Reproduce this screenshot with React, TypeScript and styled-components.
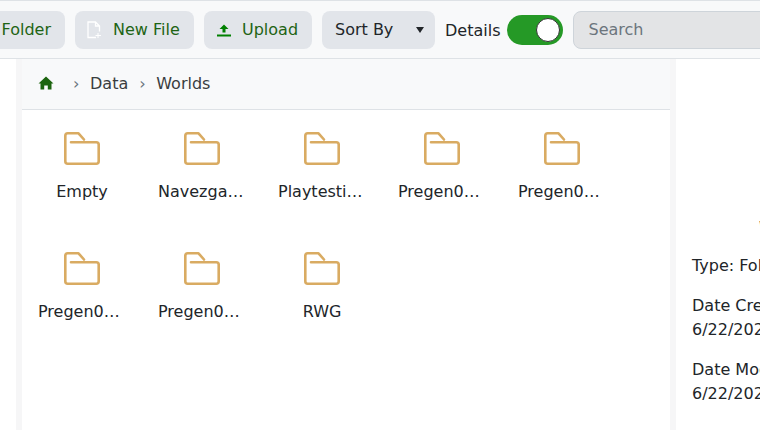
import type { FC } from 'react'
import styled, { createGlobalStyle } from 'styled-components'

const GlobalStyle = createGlobalStyle`
  html, body {
    margin: 0;
    padding: 0;
    background: #fff;
  }

  body {
    width: 760px;
    height: 430px;
    overflow: hidden;
    font-family: "DejaVu Sans", sans-serif;
    font-size: 16px;
    color: #212529;
  }
`

const Page = styled.div`
  display: flex;
  flex-direction: column;
  width: 760px;
  height: 430px;
  overflow: hidden;
`

const Toolbar = styled.div`
  display: flex;
  flex: none;
  align-items: center;
  gap: 10px;
  box-sizing: border-box;
  height: 59px;
  margin-left: -50px;
  padding-top: 1px;
  background: #f8f9fa;
  border-top: 1px solid #dee2e6;
  border-bottom: 1px solid #dee2e6;
`

const ToolButton = styled.button<{ $width: number; $dark?: boolean; $end?: boolean }>`
  display: flex;
  flex: none;
  align-items: center;
  justify-content: ${(p) => (p.$end ? 'flex-end' : 'flex-start')};
  gap: 10px;
  box-sizing: border-box;
  width: ${(p) => p.$width}px;
  height: 38px;
  padding: 0 ${(p) => (p.$end ? 14 : 12)}px 0 ${(p) => (p.$dark ? 13 : 12)}px;
  border: 0;
  border-radius: 8px;
  background: #e2e5ea;
  color: ${(p) => (p.$dark ? '#212529' : '#1e6414')};
  font: inherit;
  white-space: nowrap;
`

const ButtonLabel = styled.span`
  margin-bottom: 2px;
`

const SortCaret = styled.span`
  width: 0;
  height: 0;
  margin-left: auto;
  margin-right: -1px;
  border-top: 6px solid #212529;
  border-left: 4px solid transparent;
  border-right: 4px solid transparent;
`

const Toggle = styled.span`
  display: flex;
  flex: none;
  align-items: center;
  justify-content: flex-end;
  box-sizing: border-box;
  width: 56px;
  height: 30px;
  margin-left: -3px;
  padding: 0 3px;
  border-radius: 15px;
  background: #259926;
`

const ToggleKnob = styled.span`
  box-sizing: border-box;
  width: 24px;
  height: 24px;
  border: 1px solid #333;
  border-radius: 50%;
  background: #fff;
`

const SearchInput = styled.input`
  flex: none;
  box-sizing: border-box;
  width: 300px;
  height: 38px;
  margin-top: -1px;
  padding: 0 14px;
  border: 1px solid #ced4da;
  border-radius: 8px;
  background: #e3e4e6;
  font: inherit;

  &::placeholder {
    color: #6c757d;
    opacity: 1;
  }
`

const Body = styled.div`
  display: flex;
  flex: 1;
  min-height: 0;
`

const Gutter = styled.div`
  flex: none;
  width: 16px;
`

const Browser = styled.main`
  flex: none;
  width: 660px;
  box-sizing: border-box;
  border-left: 6px solid #f6f6f7;
  border-right: 6px solid #f6f6f7;
`

const Breadcrumbs = styled.nav`
  display: flex;
  align-items: center;
  box-sizing: border-box;
  height: 51px;
  padding: 0 0 2px 16px;
  background: #f8f9fa;
  border-bottom: 1px solid #dee2e6;
  color: #3a3d40;
`

const Separator = styled.span`
  width: 6px;
  margin: 0 11px;
  color: #6c757d;
`

const HomeLink = styled.span`
  display: flex;
  width: 16px;
  margin-right: 8px;
`

const FolderGrid = styled.div`
  display: grid;
  grid-template-columns: repeat(5, 120px);
  grid-auto-rows: 120px;
`

const FolderItem = styled.div`
  display: flex;
  flex-direction: column;
  align-items: center;
  box-sizing: border-box;
  padding: 22px 16px 0;
`

const FolderName = styled.span`
  overflow: hidden;
  width: 88px;
  margin-top: 15px;
  line-height: 24px;
  text-align: center;
  text-overflow: ellipsis;
  white-space: nowrap;
`

const Details = styled.aside`
  flex: none;
  box-sizing: border-box;
  width: 220px;
  padding: 157px 16px 0;
  white-space: nowrap;
`

const DetailTitle = styled.h2`
  margin: 0 0 14px;
  font: inherit;
  line-height: 24px;
  text-align: center;
`

const DetailRow = styled.p`
  margin: 0 0 16px;
  line-height: 24px;
`

const FolderIcon: FC = () => (
  <svg width="36" height="33" viewBox="0 0 36 33" fill="none" stroke="#d9ab62" strokeWidth="2.6" strokeLinejoin="round" strokeLinecap="round">
    <path d="M20 7.500L14.500 1.300H3.800C2.200 1.300 1.300 2.200 1.300 3.800V29.200C1.300 30.800 2.200 31.700 3.800 31.700H32.200C33.800 31.700 34.700 30.800 34.700 29.200V12.500C34.700 11 33.800 10.200 32.200 10.200H7" />
  </svg>
)

const NewFileIcon: FC = () => (
  <svg width="16" height="18" viewBox="0 0 16 18" fill="none" stroke="#fff" strokeWidth="1.3">
    <path d="M9 16.500H1V1H8.500L12.500 5V10.500M8.500 1V5H12.500" />
    <path d="M11 12V17M8.500 14.500H14" strokeWidth="1" />
  </svg>
)

const UploadIcon: FC = () => (
  <svg width="16" height="16" viewBox="0 0 16 16" fill="#008000">
    <path d="M8 2.500L12.500 7H9.500V10.500H6.500V7H3.500Z" />
    <rect x="1" y="12.500" width="14" height="2" />
  </svg>
)

const HomeIcon: FC = () => (
  <svg width="16" height="16" viewBox="0 0 16 16" fill="#1c640f">
    <path d="M8 1.500L15.500 8.500H13.500V14.500H9.800V10.500H6.200V14.500H2.500V8.500H.5Z" />
  </svg>
)

const folders = ['Empty', 'Navezgane', 'Playtesting', 'Pregen04k1', 'Pregen04k2', 'Pregen06k1', 'Pregen06k2', 'RWG']

const App: FC = () => (
  <Page>
    <GlobalStyle />
    <Toolbar>
      <ToolButton $width={115} $end>
        <ButtonLabel>Folder</ButtonLabel>
      </ToolButton>
      <ToolButton $width={119}>
        <NewFileIcon />
        <ButtonLabel>New File</ButtonLabel>
      </ToolButton>
      <ToolButton $width={108}>
        <UploadIcon />
        <ButtonLabel>Upload</ButtonLabel>
      </ToolButton>
      <ToolButton $width={113} $dark>
        <ButtonLabel>Sort By</ButtonLabel>
        <SortCaret />
      </ToolButton>
      <span>Details</span>
      <Toggle>
        <ToggleKnob />
      </Toggle>
      <SearchInput placeholder="Search" />
    </Toolbar>
    <Body>
      <Gutter />
      <Browser>
        <Breadcrumbs>
          <HomeLink>
            <HomeIcon />
          </HomeLink>
          <Separator>›</Separator>
          <span>Data</span>
          <Separator>›</Separator>
          <span>Worlds</span>
        </Breadcrumbs>
        <FolderGrid>
          {folders.map((name) => (
            <FolderItem key={name}>
              <FolderIcon />
              <FolderName>{name}</FolderName>
            </FolderItem>
          ))}
        </FolderGrid>
      </Browser>
      <Details>
        <DetailTitle>Worlds</DetailTitle>
        <DetailRow>Type: Folder</DetailRow>
        <DetailRow>
          Date Created:
          <br />
          6/22/2023
        </DetailRow>
        <DetailRow>
          Date Modified:
          <br />
          6/22/2023
        </DetailRow>
      </Details>
    </Body>
  </Page>
)

export default App
